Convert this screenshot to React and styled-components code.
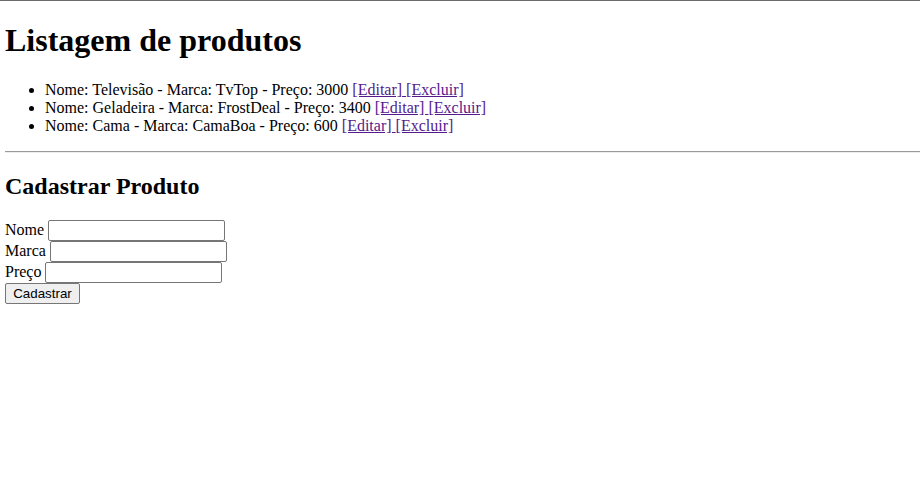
import React from "react";
import styled, { createGlobalStyle } from "styled-components";

const Global = createGlobalStyle`
  html, body { margin: 0; padding: 0; background: #fff; }
  body {
    font-family: "Liberation Serif", "Times New Roman", serif;
    font-size: 16px;
    color: #000;
  }
`;

const Page = styled.div`
  border-top: 1px solid #6b6b6b;
  padding-left: 5px;
  min-height: 495px;
`;

const Title = styled.h1`
  font-size: 32px;
  font-weight: bold;
  margin: 21.44px 0 21.44px;
`;

const List = styled.ul`
  margin: 16px 0;
  padding-left: 40px;
  list-style: disc;
`;

const Item = styled.li`
  line-height: normal;
`;

const Link = styled.a`
  color: #551a8b;
  text-decoration: underline;
  cursor: pointer;
`;

const Rule = styled.hr`
  margin: 8px 0;
  border: none;
  border-top: 1px solid #9a9a9a;
  border-bottom: 1px solid #eeeeee;
  height: 0;
`;

const Subtitle = styled.h2`
  font-size: 24px;
  font-weight: bold;
  margin: 19.92px 0;
`;

const Form = styled.form`
  margin: 0;
`;

const Field = styled.input`
  box-sizing: border-box;
  width: 177px;
  height: 21px;
  border: 1px solid #767676;
  border-radius: 2px;
  padding: 1px 2px;
  font: 13.333px "Liberation Sans", Arial, sans-serif;
  background: #fff;
  vertical-align: baseline;
  margin: 0;
`;

const Button = styled.button`
  box-sizing: border-box;
  width: 75px;
  height: 21px;
  border: 1px solid #767676;
  border-radius: 2px;
  background: #efefef;
  padding: 1px 6px;
  font: 13.333px "Liberation Sans", Arial, sans-serif;
  color: #000;
  margin: 0;
`;

const produtos = [
  { nome: "Televisão", marca: "TvTop", preco: 3000 },
  { nome: "Geladeira", marca: "FrostDeal", preco: 3400 },
  { nome: "Cama", marca: "CamaBoa", preco: 600 },
];

export default function App() {
  return (
    <>
      <Global />
      <Page>
        <Title>Listagem de produtos</Title>
        <List>
          {produtos.map((p) => (
            <Item key={p.nome}>
              Nome: {p.nome} - Marca: {p.marca} - Preço: {p.preco}{" "}
              <Link>[Editar] </Link>
              <Link>[Excluir]</Link>
            </Item>
          ))}
        </List>
        <Rule />
        <Subtitle>Cadastrar Produto</Subtitle>
        <Form onSubmit={(e) => e.preventDefault()}>
          Nome <Field type="text" />
          <br />
          Marca <Field type="text" />
          <br />
          Preço <Field type="text" />
          <br />
          <Button type="submit">Cadastrar</Button>
        </Form>
      </Page>
    </>
  );
}
